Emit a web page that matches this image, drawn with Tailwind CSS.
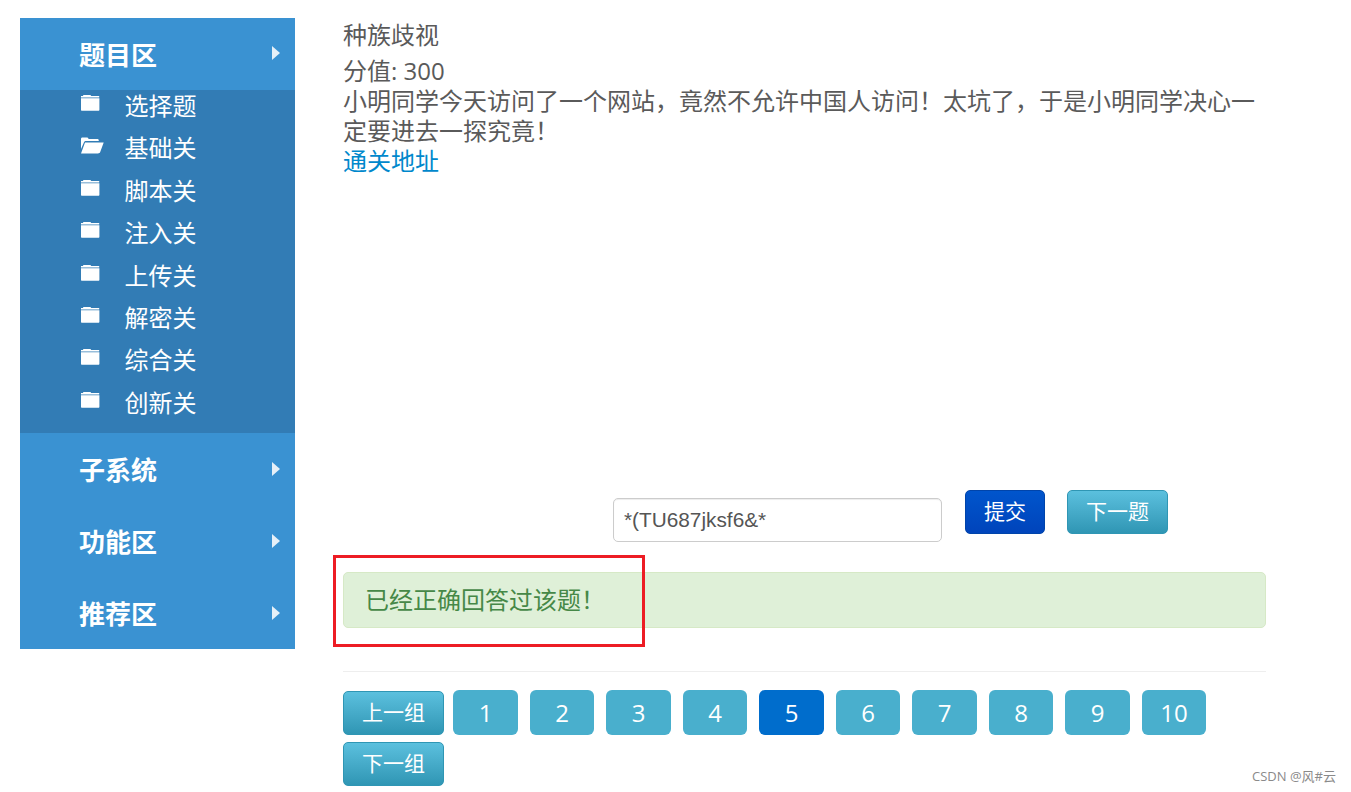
<!DOCTYPE html>
<html lang="zh">
<head>
    <meta charset="UTF-8">
    <title>种族歧视</title>
    <script src="https://cdn.jsdelivr.net/npm/@tailwindcss/browser@4"></script>
</head>
<body class="bg-white text-[#5a5a5a] font-['Open_Sans','Noto_Sans_CJK_SC',sans-serif] overflow-hidden">
<div class="relative h-[792px] w-[1351px] flex items-start overflow-hidden">

    <!-- 左侧菜单 -->
    <aside class="mt-[18px] ml-[20px] w-[275px] bg-[#3a92d2] text-white shrink-0">
        <div class="h-[72px] pl-[59px] pr-[15px] flex items-center justify-between">
            <span class="text-[26px] font-bold leading-none mt-[2px]">题目区</span>
            <svg class="-mt-[2px]" width="8" height="14" viewBox="0 0 8 14"><path d="M0 0 L8 7 L0 14 Z" fill="#e6f0f8"/></svg>
        </div>
        <ul class="bg-[#327cb5] h-[343px] pl-[60px] text-[24px] leading-[32px]">
            <li class="h-[42.4px] flex items-start">
                <svg class="mt-[4px] w-[20px] h-[17px]" viewBox="0 0 20 17"><path d="M3 2V1.7C3 1.2 3.3 .9 3.8 .9H10C10.6 .9 11 1.3 11.2 2H19.2V3.4H1V2Z M1 4.2H19.4V15.7C19.4 16.3 19 16.7 18.4 16.7H2C1.4 16.7 1 16.3 1 15.7Z" fill="#fff"/></svg>
                <span class="ml-[24.6px]">选择题</span>
            </li>
            <li class="h-[42.4px] flex items-start">
                <svg class="mt-[4px] w-[24px] h-[18px]" viewBox="0 0 24 18"><path d="M1 13V3C1 2 1.6 1.5 2.4 1.5H7C7.8 1.5 8.2 2 8.6 3H17.5C18.3 3 18.8 3.6 18.8 5H6C5 5 4.4 5.5 4 6.3Z M5 6.5H23.7L20.2 16C19.8 17 19 17.4 18 17.4H1Z" fill="#fff"/></svg>
                <span class="ml-[20.6px]">基础关</span>
            </li>
            <li class="h-[42.4px] flex items-start">
                <svg class="mt-[4px] w-[20px] h-[17px]" viewBox="0 0 20 17"><path d="M3 2V1.7C3 1.2 3.3 .9 3.8 .9H10C10.6 .9 11 1.3 11.2 2H19.2V3.4H1V2Z M1 4.2H19.4V15.7C19.4 16.3 19 16.7 18.4 16.7H2C1.4 16.7 1 16.3 1 15.7Z" fill="#fff"/></svg>
                <span class="ml-[24.6px]">脚本关</span>
            </li>
            <li class="h-[42.4px] flex items-start">
                <svg class="mt-[4px] w-[20px] h-[17px]" viewBox="0 0 20 17"><path d="M3 2V1.7C3 1.2 3.3 .9 3.8 .9H10C10.6 .9 11 1.3 11.2 2H19.2V3.4H1V2Z M1 4.2H19.4V15.7C19.4 16.3 19 16.7 18.4 16.7H2C1.4 16.7 1 16.3 1 15.7Z" fill="#fff"/></svg>
                <span class="ml-[24.6px]">注入关</span>
            </li>
            <li class="h-[42.4px] flex items-start">
                <svg class="mt-[4px] w-[20px] h-[17px]" viewBox="0 0 20 17"><path d="M3 2V1.7C3 1.2 3.3 .9 3.8 .9H10C10.6 .9 11 1.3 11.2 2H19.2V3.4H1V2Z M1 4.2H19.4V15.7C19.4 16.3 19 16.7 18.4 16.7H2C1.4 16.7 1 16.3 1 15.7Z" fill="#fff"/></svg>
                <span class="ml-[24.6px]">上传关</span>
            </li>
            <li class="h-[42.4px] flex items-start">
                <svg class="mt-[4px] w-[20px] h-[17px]" viewBox="0 0 20 17"><path d="M3 2V1.7C3 1.2 3.3 .9 3.8 .9H10C10.6 .9 11 1.3 11.2 2H19.2V3.4H1V2Z M1 4.2H19.4V15.7C19.4 16.3 19 16.7 18.4 16.7H2C1.4 16.7 1 16.3 1 15.7Z" fill="#fff"/></svg>
                <span class="ml-[24.6px]">解密关</span>
            </li>
            <li class="h-[42.4px] flex items-start">
                <svg class="mt-[4px] w-[20px] h-[17px]" viewBox="0 0 20 17"><path d="M3 2V1.7C3 1.2 3.3 .9 3.8 .9H10C10.6 .9 11 1.3 11.2 2H19.2V3.4H1V2Z M1 4.2H19.4V15.7C19.4 16.3 19 16.7 18.4 16.7H2C1.4 16.7 1 16.3 1 15.7Z" fill="#fff"/></svg>
                <span class="ml-[24.6px]">综合关</span>
            </li>
            <li class="h-[42.4px] flex items-start">
                <svg class="mt-[4px] w-[20px] h-[17px]" viewBox="0 0 20 17"><path d="M3 2V1.7C3 1.2 3.3 .9 3.8 .9H10C10.6 .9 11 1.3 11.2 2H19.2V3.4H1V2Z M1 4.2H19.4V15.7C19.4 16.3 19 16.7 18.4 16.7H2C1.4 16.7 1 16.3 1 15.7Z" fill="#fff"/></svg>
                <span class="ml-[24.6px]">创新关</span>
            </li>
        </ul>
        <div class="h-[72px] pl-[59px] pr-[15px] flex items-center justify-between">
            <span class="text-[26px] font-bold leading-none mt-[2px]">子系统</span>
            <svg width="8" height="14" viewBox="0 0 8 14"><path d="M0 0 L8 7 L0 14 Z" fill="#e6f0f8"/></svg>
        </div>
        <div class="h-[72px] pl-[59px] pr-[15px] flex items-center justify-between">
            <span class="text-[26px] font-bold leading-none mt-[2px]">功能区</span>
            <svg width="8" height="14" viewBox="0 0 8 14"><path d="M0 0 L8 7 L0 14 Z" fill="#e6f0f8"/></svg>
        </div>
        <div class="h-[72px] pl-[59px] pr-[15px] flex items-center justify-between">
            <span class="text-[26px] font-bold leading-none mt-[2px]">推荐区</span>
            <svg width="8" height="14" viewBox="0 0 8 14"><path d="M0 0 L8 7 L0 14 Z" fill="#e6f0f8"/></svg>
        </div>
    </aside>

    <!-- 题目内容 -->
    <main class="ml-[48px] w-[923px] shrink-0">
        <h4 class="mt-[18px] text-[24px] leading-[34px]">种族歧视</h4>
        <p class="mt-[2px] text-[24px] leading-[34px]">分值: 300</p>
        <div class="-mt-[2px] text-[24px] leading-[30px] h-[404px]">
            <p>小明同学今天访问了一个网站，竟然不允许中国人访问！太坑了，于是小明同学决心一定要进去一探究竟！</p>
            <a href="#" class="text-[#0088cc]">通关地址</a>
        </div>

        <form class="flex items-start">
            <input value="*(TU687jksf6&amp;*" class="ml-[270px] mt-[8px] w-[329px] h-[44px] px-[10px] text-[20.8px] text-[#555] font-['Liberation_Sans'] bg-white border border-[#ccc] rounded-[5px] shadow-[inset_0_1px_1px_rgba(0,0,0,0.075)]">
            <button type="button" class="ml-[23px] w-[80px] h-[44px] text-[21px] text-white rounded-[5px] border border-[#0044aa] bg-gradient-to-b from-[#0055cc] to-[#0044bb]">提交</button>
            <button type="button" class="ml-[22px] w-[101px] h-[44px] text-[21px] text-white rounded-[5px] border border-[#2f96b4] bg-gradient-to-b from-[#5bc0de] to-[#2f96b4]">下一题</button>
        </form>

        <div class="mt-[30px] h-[56px] flex items-center pl-[21px] text-[24px] text-[#468847] bg-[#dff0d8] border border-[#d6e9c6] rounded-[5px]">已经正确回答过该题！</div>

        <hr class="mt-[43px] border-[#eeeeee]">

        <nav class="mt-[18px] flex flex-wrap gap-x-[12px] gap-y-[7px] text-white">
            <button type="button" class="w-[101px] h-[44px] mt-px -mr-[3px] text-[21px] rounded-[5px] border border-[#2f96b4] bg-gradient-to-b from-[#5bc0de] to-[#2f96b4]">上一组</button>
            <a href="#" class="w-[65px] h-[45px] flex items-center justify-center text-[24px] rounded-[6px] bg-[#49afcd]">1</a>
            <a href="#" class="w-[64px] h-[45px] flex items-center justify-center text-[24px] rounded-[6px] bg-[#49afcd]">2</a>
            <a href="#" class="w-[65px] h-[45px] flex items-center justify-center text-[24px] rounded-[6px] bg-[#49afcd]">3</a>
            <a href="#" class="w-[64px] h-[45px] flex items-center justify-center text-[24px] rounded-[6px] bg-[#49afcd]">4</a>
            <a href="#" class="w-[65px] h-[45px] flex items-center justify-center text-[24px] rounded-[6px] bg-[#006dcc]">5</a>
            <a href="#" class="w-[64px] h-[45px] flex items-center justify-center text-[24px] rounded-[6px] bg-[#49afcd]">6</a>
            <a href="#" class="w-[65px] h-[45px] flex items-center justify-center text-[24px] rounded-[6px] bg-[#49afcd]">7</a>
            <a href="#" class="w-[64px] h-[45px] flex items-center justify-center text-[24px] rounded-[6px] bg-[#49afcd]">8</a>
            <a href="#" class="w-[65px] h-[45px] flex items-center justify-center text-[24px] rounded-[6px] bg-[#49afcd]">9</a>
            <a href="#" class="w-[64px] h-[45px] flex items-center justify-center text-[24px] rounded-[6px] bg-[#49afcd]">10</a>
            <button type="button" class="w-[101px] h-[44px] text-[21px] rounded-[5px] border border-[#2f96b4] bg-gradient-to-b from-[#5bc0de] to-[#2f96b4]">下一组</button>
        </nav>
    </main>

    <!-- 截图上的标注框和水印 -->
    <div class="absolute left-[333px] top-[555px] w-[312px] h-[92px] border-[3px] border-[#ed1c24]"></div>
    <span class="absolute right-[15px] top-[767px] text-[13px] leading-[18px] text-[#8a8a8a]">CSDN @风#云</span>
</div>
</body>
</html>
